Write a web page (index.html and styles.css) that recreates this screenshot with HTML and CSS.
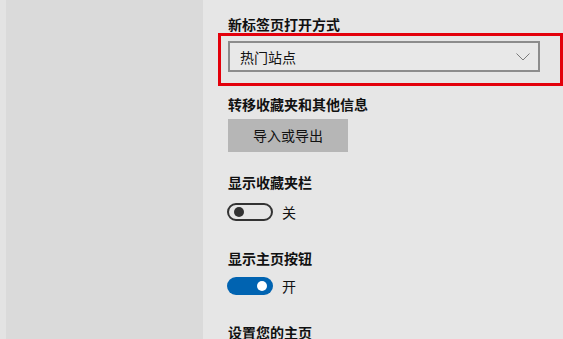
FILE: index.html
```html
<!DOCTYPE html>
<html lang="zh-CN">
<head>
  <meta charset="UTF-8" />
  <title>设置</title>
  <link rel="stylesheet" href="styles.css">
</head>
<body>
  <div class="sidebar"></div>

  <div class="content">
    <div class="label first">新标签页打开方式</div>
    <div class="highlight">
      <div class="select">
        <span>热门站点</span>
        <svg class="chevron" width="14" height="8" viewBox="0 0 14 8">
          <polyline points="0.5,0.5 7,7 13.5,0.5" fill="none" stroke="#7a7a7a" stroke-width="1"/>
        </svg>
      </div>
    </div>

    <div class="label transfer">转移收藏夹和其他信息</div>
    <div class="button">导入或导出</div>

    <div class="label section after-button">显示收藏夹栏</div>
    <div class="toggle-row">
      <span class="toggle off"><span class="knob"></span></span>
      <span class="toggle-text">关</span>
    </div>

    <div class="label section">显示主页按钮</div>
    <div class="toggle-row on-row">
      <span class="toggle on"><span class="knob"></span></span>
      <span class="toggle-text">开</span>
    </div>

    <div class="label section">设置您的主页</div>
  </div>
</body>
</html>
```

FILE: styles.css
```css
* {
  box-sizing: border-box;
  margin: 0;
  padding: 0;
}

html, body {
  height: 100%;
}

body {
  font-family: "Noto Sans CJK SC", "Microsoft YaHei", sans-serif;
  font-size: 14px;
  color: #111;
  display: flex;
  overflow: hidden;
}

.sidebar {
  width: 203px;
  flex-shrink: 0;
  background: #dadada;
  border-left: 6px solid #e3e3e3;
}

.content {
  flex: 1;
  background: #e6e6e6;
  padding-left: 25px;
}

.label {
  font-weight: 700;
  line-height: 18px;
  height: 18px;
}

.label.first {
  margin-top: 15px;
}

.label.transfer {
  margin-top: 9px;
}

.label.section {
  margin-top: 28px;
}

.label.section.after-button {
  margin-top: 21px;
}

.highlight {
  margin-left: -10px;
  border: 3px solid #e3000b;
  padding: 5px 20px 11px 7px;
}

.select {
  height: 31px;
  border: 2px solid #8c8c8c;
  background: #e8e8e8;
  display: flex;
  align-items: center;
  justify-content: space-between;
  padding: 0 8px 0 10px;
}

.chevron {
  display: block;
}

.button {
  margin-top: 6px;
  width: 120px;
  height: 33px;
  line-height: 33px;
  background: #b6b6b6;
  text-align: center;
}

.toggle-row {
  display: flex;
  align-items: center;
  margin-top: 12px;
  height: 18px;
  margin-left: -1px;
}

.toggle-row.on-row {
  margin-top: 10px;
}

.toggle {
  width: 46px;
  height: 18px;
  border-radius: 9px;
  display: flex;
  align-items: center;
  padding: 0 5px;
}

.toggle.off {
  border: 2px solid #333;
}

.toggle.on {
  background: #0063b1;
  justify-content: flex-end;
  padding: 0 6px;
}

.knob {
  width: 10px;
  height: 10px;
  border-radius: 50%;
}

.toggle.off .knob {
  background: #333;
}

.toggle.on .knob {
  background: #fff;
}

.toggle-text {
  margin-left: 9px;
}
```
